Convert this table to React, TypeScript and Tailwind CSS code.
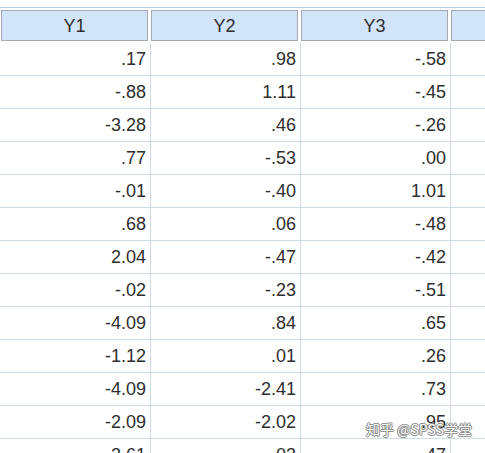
import React from "react";

const rows: string[][] = [
  [".17", ".98", "-.58"],
  ["-.88", "1.11", "-.45"],
  ["-3.28", ".46", "-.26"],
  [".77", "-.53", ".00"],
  ["-.01", "-.40", "1.01"],
  [".68", ".06", "-.48"],
  ["2.04", "-.47", "-.42"],
  ["-.02", "-.23", "-.51"],
  ["-4.09", ".84", ".65"],
  ["-1.12", ".01", ".26"],
  ["-4.09", "-2.41", ".73"],
  ["-2.09", "-2.02", ".95"],
  ["-2.61", ".03", ".47"],
];

export default function App() {
  return (
    <div
      className="relative w-[485px] h-[453px] overflow-hidden bg-white text-[#2e2e2e]"
      style={{ fontFamily: '"Liberation Sans", Arial, sans-serif' }}
    >
      <div className="h-[7px]" />
      <div className="h-[1px] bg-[#b3cdee]" />
      <div className="h-[2px]" />
      <div className="flex h-[31px] pl-[1px] gap-[3px]">
        {["Y1", "Y2", "Y3", ""].map((h, i) => (
          <div
            key={i}
            className="w-[147px] shrink-0 h-[31px] border border-[#a6a9ad] bg-[#d2e4f9] flex items-center justify-center text-[18px] leading-none"
          >
            {h}
          </div>
        ))}
      </div>
      <div className="h-[2px]" />
      {rows.map((r, i) => (
        <div key={i} className="flex h-[33px] border-b border-[#cfdbe8]">
          {r.map((v, j) => (
            <div
              key={j}
              className={`${j === 0 ? "w-[151px]" : "w-[150px]"} shrink-0 border-r border-[#cfdbe8] flex items-center justify-end pr-[4px] text-[18px] leading-none`}
            >
              {v}
            </div>
          ))}
          <div className="flex-1" />
        </div>
      ))}
      <div
        className="absolute left-[366px] top-[422px] text-[14px] leading-none text-white whitespace-nowrap"
        style={{
          fontFamily: '"Noto Sans CJK SC", "Liberation Sans", sans-serif',
          textShadow:
            "0 0 1px #777, 0 0 1px #777, 1px 0 0 #999, -1px 0 0 #999, 0 1px 0 #999, 0 -1px 0 #999",
        }}
      >
        知乎 @SPSS学堂
      </div>
    </div>
  );
}
